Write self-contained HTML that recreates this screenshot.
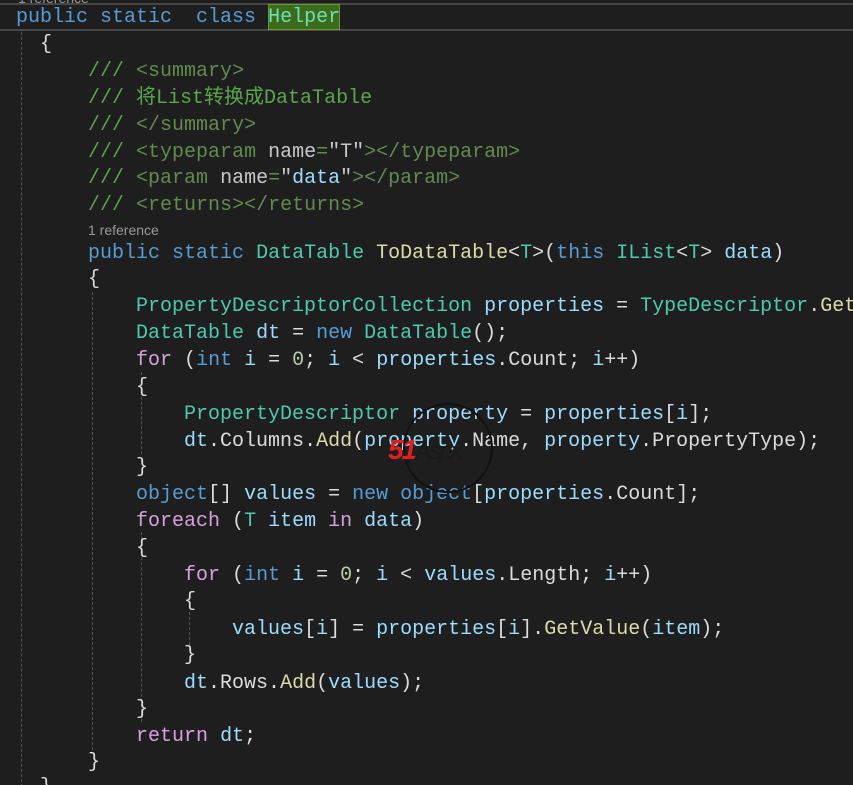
<!DOCTYPE html>
<html><head><meta charset="utf-8"><style>
html,body{margin:0;padding:0;background:#1e1e1e;width:853px;height:785px;overflow:hidden}
#w{position:relative;width:853px;height:785px;overflow:hidden}
.l{position:absolute;left:0;height:24px;line-height:24px;white-space:pre;font-family:"Liberation Mono","Noto Sans CJK SC",monospace;font-size:20px;color:#dcdcdc}
.k{color:#569cd6}.t{color:#4ec9b0}.c{color:#57a64a}.x{color:#608b4e}.n{color:#c8c8c8}.v{color:#9cdcfe}.m{color:#dcdcaa}.p{color:#d8a0df}.num{color:#b5cea8}
.ref{position:absolute;left:88px;font-family:"Liberation Sans",sans-serif;font-size:14px;color:#999}
.gd{position:absolute;width:0;border-left:1px dashed #555}
</style></head><body><div id="w">
<div style="position:absolute;left:0;top:3px;width:853px;height:24px;border-top:2px solid #464646;border-bottom:2px solid #464646"></div>
<div style="position:absolute;left:268px;top:4px;width:72px;height:26px;background:#3d6b1c;border:1px solid #6c9a32;box-sizing:border-box"></div>
<div class="ref" style="top:-10px;left:18px">1 reference</div>
<div class="gd" style="left:21px;top:32px;height:760px"></div>
<div class="gd" style="left:92px;top:292px;height:458px"></div>
<div class="gd" style="left:141px;top:372px;height:82px"></div>
<div class="gd" style="left:141px;top:532px;height:190px"></div>
<div class="gd" style="left:189px;top:612px;height:38px"></div>
<div class="l" style="top:6px;left:16px"><span class="k">public static</span>  <span class="k">class</span> <span style="color:#6ee0b8">Helper</span></div>
<div class="l" style="top:33px;left:16px">  {</div>
<div class="l" style="top:60px;left:16px">      <span class="c">///</span> <span class="x">&lt;summary&gt;</span></div>
<div class="l" style="top:87px;left:16px">      <span class="c">///</span> <span class="c">将List转换成DataTable</span></div>
<div class="l" style="top:114px;left:16px">      <span class="c">///</span> <span class="x">&lt;/summary&gt;</span></div>
<div class="l" style="top:141px;left:16px">      <span class="c">///</span> <span class="x">&lt;typeparam</span> <span class="n">name</span><span class="x">=</span><span class="n">"T"</span><span class="x">&gt;&lt;/typeparam&gt;</span></div>
<div class="l" style="top:167px;left:16px">      <span class="c">///</span> <span class="x">&lt;param</span> <span class="n">name</span><span class="x">=</span><span class="n">"</span><span class="v">data</span><span class="n">"</span><span class="x">&gt;&lt;/param&gt;</span></div>
<div class="l" style="top:194px;left:16px">      <span class="c">///</span> <span class="x">&lt;returns&gt;&lt;/returns&gt;</span></div>
<div class="ref" style="top:222px">1 reference</div>
<div class="l" style="top:242px;left:16px">      <span class="k">public static</span> <span class="t">DataTable</span> <span class="m">ToDataTable</span>&lt;<span class="t">T</span>&gt;(<span class="k">this</span> <span class="t">IList</span>&lt;<span class="t">T</span>&gt; <span class="v">data</span>)</div>
<div class="l" style="top:268px;left:16px">      {</div>
<div class="l" style="top:295px;left:16px">          <span class="t">PropertyDescriptorCollection</span> <span class="v">properties</span> = <span class="t">TypeDescriptor</span>.<span class="m">Get</span></div>
<div class="l" style="top:322px;left:16px">          <span class="t">DataTable</span> <span class="v">dt</span> = <span class="k">new</span> <span class="t">DataTable</span>();</div>
<div class="l" style="top:349px;left:16px">          <span class="p">for</span> (<span class="k">int</span> <span class="v">i</span> = <span class="num">0</span>; <span class="v">i</span> &lt; <span class="v">properties</span>.Count; <span class="v">i</span>++)</div>
<div class="l" style="top:376px;left:16px">          {</div>
<div class="l" style="top:403px;left:16px">              <span class="t">PropertyDescriptor</span> <span class="v">property</span> = <span class="v">properties</span>[<span class="v">i</span>];</div>
<div class="l" style="top:430px;left:16px">              <span class="v">dt</span>.Columns.<span class="m">Add</span>(<span class="v">property</span>.Name, <span class="v">property</span>.PropertyType);</div>
<div class="l" style="top:456px;left:16px">          }</div>
<div class="l" style="top:483px;left:16px">          <span class="k">object</span>[] <span class="v">values</span> = <span class="k">new</span> <span class="k">object</span>[<span class="v">properties</span>.Count];</div>
<div class="l" style="top:510px;left:16px">          <span class="p">foreach</span> (<span class="t">T</span> <span class="v">item</span> <span class="p">in</span> <span class="v">data</span>)</div>
<div class="l" style="top:537px;left:16px">          {</div>
<div class="l" style="top:564px;left:16px">              <span class="p">for</span> (<span class="k">int</span> <span class="v">i</span> = <span class="num">0</span>; <span class="v">i</span> &lt; <span class="v">values</span>.Length; <span class="v">i</span>++)</div>
<div class="l" style="top:590px;left:16px">              {</div>
<div class="l" style="top:618px;left:16px">                  <span class="v">values</span>[<span class="v">i</span>] = <span class="v">properties</span>[<span class="v">i</span>].<span class="m">GetValue</span>(<span class="v">item</span>);</div>
<div class="l" style="top:644px;left:16px">              }</div>
<div class="l" style="top:672px;left:16px">              <span class="v">dt</span>.Rows.<span class="m">Add</span>(<span class="v">values</span>);</div>
<div class="l" style="top:698px;left:16px">          }</div>
<div class="l" style="top:725px;left:16px">          <span class="p">return</span> <span class="v">dt</span>;</div>
<div class="l" style="top:751px;left:16px">      }</div>
<div class="l" style="top:776px;left:16px">  }</div>
<div style="position:absolute;left:403px;top:403px;width:86px;height:86px;border:2px solid #111;border-radius:50%"></div>
<div style="position:absolute;left:388px;top:434px;font:italic bold 28px 'Liberation Sans',sans-serif;color:#e02020;letter-spacing:-2px">51<span style="color:#1a1a1a;font-weight:normal;font-size:24px">Aspx</span></div>
</div></body></html>
